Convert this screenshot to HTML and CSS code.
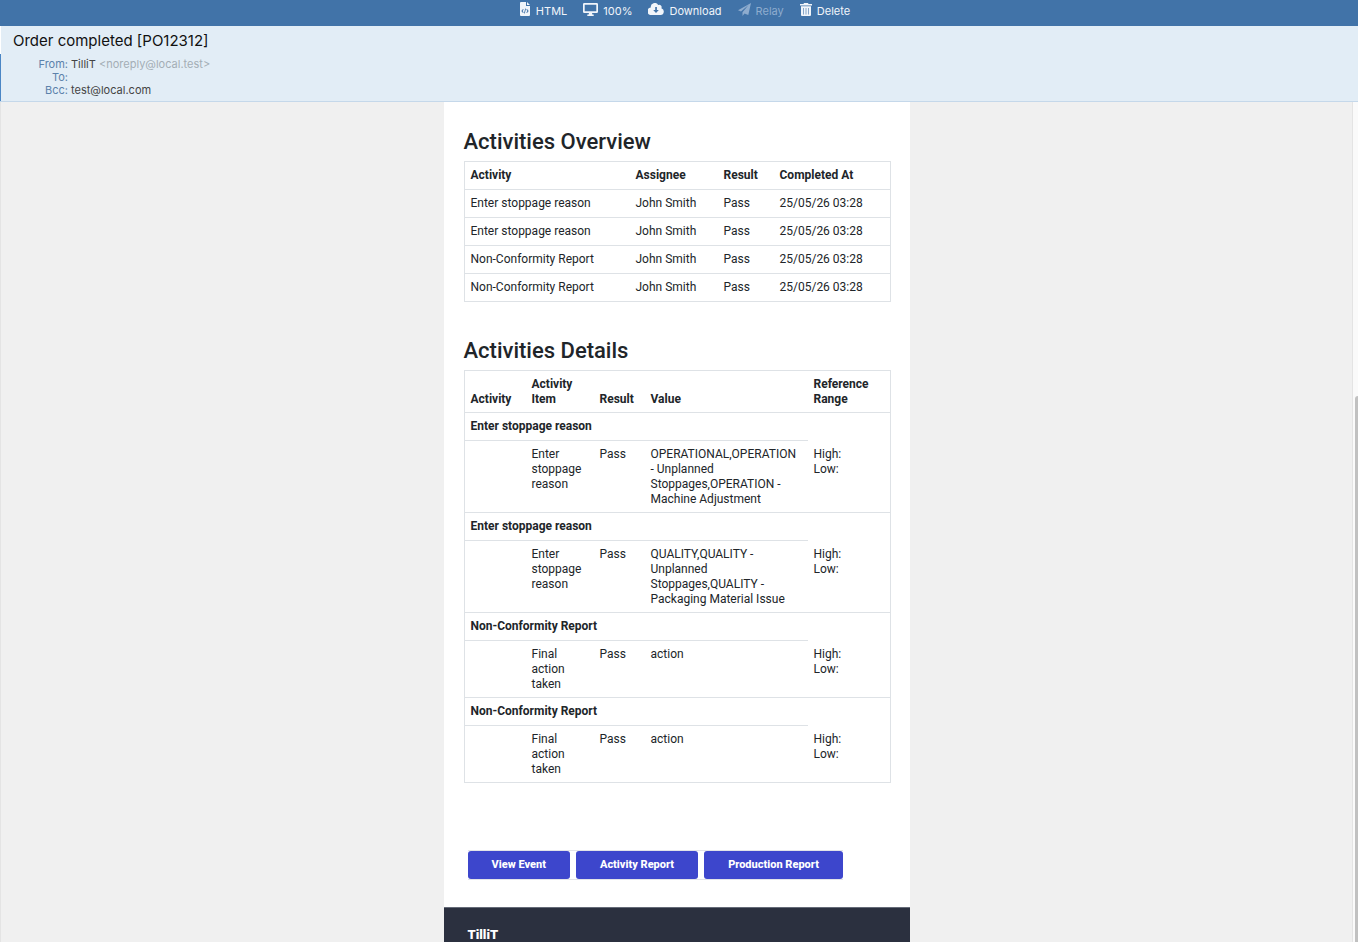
FILE: index.html
```html
<!DOCTYPE html>
<html lang="en">
<head>
    <meta charset="UTF-8">
    <meta name="viewport" content="width=device-width, initial-scale=1.0">
    <title>Order completed [PO12312]</title>
    <link rel="stylesheet" href="styles.css">
</head>
<body>
    <nav class="toolbar">
        <button type="button">
            <svg width="11" height="14" viewBox="0 0 11 14"><path fill="currentColor" fill-rule="evenodd" d="M1 0h5v4h4v9a1 1 0 0 1-1 1H1a1 1 0 0 1-1-1V1a1 1 0 0 1 1-1zM7 0l3 3H7zM3 7L1.300 9 3 11l.7-.6L2.600 9l1.100-1.400zM7 7l-.7.6L7.400 9l-1.100 1.400.7.6L8.700 9zM5.200 6.500L4 11.300l.8.200L6 6.700z"/></svg>
            <span>HTML</span>
        </button>
        <button type="button">
            <svg width="15" height="13" viewBox="0 0 15 13"><path fill="currentColor" fill-rule="evenodd" d="M1.300 0h12.400A1.300 1.300 0 0 1 15 1.300v7.400a1.300 1.300 0 0 1-1.300 1.300H9l.4 1.500h1.300V13H4.300v-1.500h1.300L6 10H1.300A1.300 1.300 0 0 1 0 8.700V1.300A1.300 1.300 0 0 1 1.300 0zM1.700 1.700v6.600h11.600V1.700z"/></svg>
            <span>100%</span>
        </button>
        <button type="button">
            <svg width="16" height="12" viewBox="0 0 16 12"><path fill="currentColor" fill-rule="evenodd" d="M13.400 5.200A2.400 2.400 0 0 0 10.200 2 4 4 0 0 0 2.800 4.600 3.700 3.700 0 0 0 3.600 12h9a3.500 3.500 0 0 0 .8-6.800zM7.200 4h1.700v3h1.900L8 10 5.200 7h2z"/></svg>
            <span>Download</span>
        </button>
        <button type="button" disabled>
            <svg width="13" height="13" viewBox="0 0 13 13"><path fill="currentColor" d="M13 0L0 7.200l3 1.300L10.500 2 4.500 9.200V13l2-2.600 3.800 1.600z"/></svg>
            <span>Relay</span>
        </button>
        <button type="button">
            <svg width="12" height="13" viewBox="0 0 12 13"><path fill="currentColor" fill-rule="evenodd" d="M0 1h3.500L4 0h4l.5 1H12v1.400H0zM1 3.200h10V12a1 1 0 0 1-1 1H2a1 1 0 0 1-1-1zM3.200 5v6.500h.6V5zM5.700 5v6.500h.6V5zM8.200 5v6.500h.6V5z"/></svg>
            <span>Delete</span>
        </button>
    </nav>

    <header class="message-header">
        <h1>Order completed [PO12312]</h1>
        <dl>
            <dt>From:</dt>
            <dd>TilliT <span class="address">&lt;noreply@local.test&gt;</span></dd>
            <dt>To:</dt>
            <dd></dd>
            <dt>Bcc:</dt>
            <dd>test@local.com</dd>
        </dl>
    </header>

    <div class="viewer">
        <main class="message">
            <article class="mail">
                <div class="mail-body">
                    <h2>Activities Overview</h2>
                    <table class="overview">
                        <colgroup>
                            <col class="w-activity"><col class="w-assignee"><col class="w-result"><col>
                        </colgroup>
                        <thead>
                            <tr><th>Activity</th><th>Assignee</th><th>Result</th><th>Completed At</th></tr>
                        </thead>
                        <tbody>
                            <tr><td>Enter stoppage reason</td><td>John Smith</td><td>Pass</td><td>25/05/26 03:28</td></tr>
                            <tr><td>Enter stoppage reason</td><td>John Smith</td><td>Pass</td><td>25/05/26 03:28</td></tr>
                            <tr><td>Non-Conformity Report</td><td>John Smith</td><td>Pass</td><td>25/05/26 03:28</td></tr>
                            <tr><td>Non-Conformity Report</td><td>John Smith</td><td>Pass</td><td>25/05/26 03:28</td></tr>
                        </tbody>
                    </table>

                    <h2>Activities Details</h2>
                    <table class="details">
                        <colgroup>
                            <col class="w-name"><col class="w-item"><col class="w-pass"><col class="w-value"><col>
                        </colgroup>
                        <thead>
                            <tr><th>Activity</th><th>Activity Item</th><th>Result</th><th>Value</th><th>Reference<br>Range</th></tr>
                        </thead>
                        <tbody>
                            <tr class="group"><th colspan="4">Enter stoppage reason</th><td></td></tr>
                            <tr>
                                <td></td>
                                <td>Enter stoppage reason</td>
                                <td>Pass</td>
                                <td>OPERATIONAL,OPERATION<br>- Unplanned<br>Stoppages,OPERATION - Machine Adjustment</td>
                                <td>High:<br>Low:</td>
                            </tr>
                            <tr class="group"><th colspan="4">Enter stoppage reason</th><td></td></tr>
                            <tr>
                                <td></td>
                                <td>Enter stoppage reason</td>
                                <td>Pass</td>
                                <td>QUALITY,QUALITY -<br>Unplanned<br>Stoppages,QUALITY - Packaging Material Issue</td>
                                <td>High:<br>Low:</td>
                            </tr>
                            <tr class="group"><th colspan="4">Non-Conformity Report</th><td></td></tr>
                            <tr>
                                <td></td>
                                <td>Final action taken</td>
                                <td>Pass</td>
                                <td>action</td>
                                <td>High:<br>Low:</td>
                            </tr>
                            <tr class="group"><th colspan="4">Non-Conformity Report</th><td></td></tr>
                            <tr>
                                <td></td>
                                <td>Final action taken</td>
                                <td>Pass</td>
                                <td>action</td>
                                <td>High:<br>Low:</td>
                            </tr>
                        </tbody>
                    </table>

                    <div class="actions">
                        <a href="#">View Event</a>
                        <a href="#">Activity Report</a>
                        <a href="#">Production Report</a>
                    </div>
                </div>
                <footer class="mail-footer">
                    <div class="logo">TilliT</div>
                </footer>
            </article>
        </main>
        <div class="scrollbar"><div class="thumb"></div></div>
    </div>
</body>
</html>
```

FILE: styles.css
```css
* {
    box-sizing: border-box;
}

body {
    margin: 0;
    height: 100vh;
    display: flex;
    flex-direction: column;
    overflow: hidden;
    font-family: Inter, "Liberation Sans", sans-serif;
    font-size: 11px;
    background-color: #fff;
}

/* Top toolbar */
.toolbar {
    flex: none;
    height: 26px;
    padding: 0 0 5px 12px;
    display: flex;
    justify-content: center;
    align-items: center;
    gap: 16px;
    background-color: #4173a8;
}

.toolbar button {
    display: flex;
    align-items: center;
    gap: 5px;
    padding: 0;
    border: none;
    background: none;
    color: #f1f5fa;
    font: inherit;
    line-height: 20px;
    cursor: pointer;
}

.toolbar svg {
    margin-bottom: 3px;
}

.toolbar button:disabled {
    color: #8eacce;
    cursor: default;
}

/* Subject and addresses */
.message-header {
    flex: none;
    border-bottom: 1px solid #c5d8ea;
    background-color: #e2edf6;
}

.message-header h1 {
    margin: 0;
    padding: 5px 12px 3px;
    border-left: 1px solid #fff;
    font-size: 15px;
    font-weight: 400;
    line-height: 20px;
    color: #111;
}

.message-header dl {
    display: grid;
    grid-template-columns: 55px 1fr;
    grid-auto-rows: 13px;
    column-gap: 3px;
    margin: 0;
    padding: 4px 12px;
    border-left: 1px solid #4a86c5;
    line-height: 13px;
}

.message-header dt {
    text-align: right;
    color: #5c82ab;
}

.message-header dd {
    margin: 0;
    color: #444;
}

.message-header .address {
    color: #a4adb5;
}

/* Message viewer */
.viewer {
    flex: 1;
    min-height: 0;
    display: flex;
}

.message {
    flex: 1;
    overflow: hidden;
    border-left: 1px solid #e4e4e4;
    border-right: 1px solid #e4e4e4;
    background-color: #f0f0f0;
}

.scrollbar {
    flex: none;
    width: 5px;
    padding-left: 2px;
    display: flex;
    align-items: flex-end;
    background-color: #fafafa;
}

.thumb {
    width: 100%;
    height: 65%;
    border-top-left-radius: 3px;
    background-color: #c1c1c1;
}

.mail {
    max-width: 466px;
    margin: 0 auto;
    background-color: #fff;
    font-family: Roboto, "Liberation Sans", sans-serif;
    color: #212529;
}

.mail-body {
    padding: 26px 19px 27px 20px;
}

.mail h2 {
    margin: 0 0 5px;
    font-size: 22px;
    font-weight: 500;
    line-height: 28px;
}

.mail table {
    width: 100%;
    table-layout: fixed;
    border: 1px solid #dee2e6;
    border-bottom: none;
    border-spacing: 0;
    font-size: 12px;
    line-height: 15px;
}

.mail th,
.mail td {
    padding: 6px;
    border-bottom: 1px solid #dee2e6;
    text-align: left;
    vertical-align: top;
}

.mail thead th {
    vertical-align: bottom;
}

.overview {
    margin-bottom: 35px;
}

.w-activity { width: 165px; }
.w-assignee { width: 88px; }
.w-result { width: 56px; }

.w-name { width: 61px; }
.w-item { width: 68px; }
.w-pass { width: 51px; }
.w-value { width: 163px; }

.mail .details th,
.mail .details td {
    padding-bottom: 5px;
}

.mail .details .group th {
    padding-bottom: 6px;
}

.mail .details .group td {
    border-bottom: none;
}

/* Report links */
.actions {
    display: flex;
    gap: 6px;
    width: fit-content;
    margin: 67px 0 0 4px;
    border-top: 1px solid #e3e3e8;
    border-bottom: 1px solid #e3e3e8;
}

.actions a {
    padding: 0 24px;
    border-radius: 3px;
    background-color: #3d46cc;
    color: #fff;
    font-size: 11px;
    font-weight: 800;
    line-height: 28px;
    text-decoration: none;
}

.mail-footer {
    height: 140px;
    padding: 20px 24px;
    border-top: 1px solid #656b78;
    background-color: #2b303f;
    color: #fff;
}

.logo {
    font-size: 13px;
    font-weight: 900;
    line-height: 13px;
}
```
